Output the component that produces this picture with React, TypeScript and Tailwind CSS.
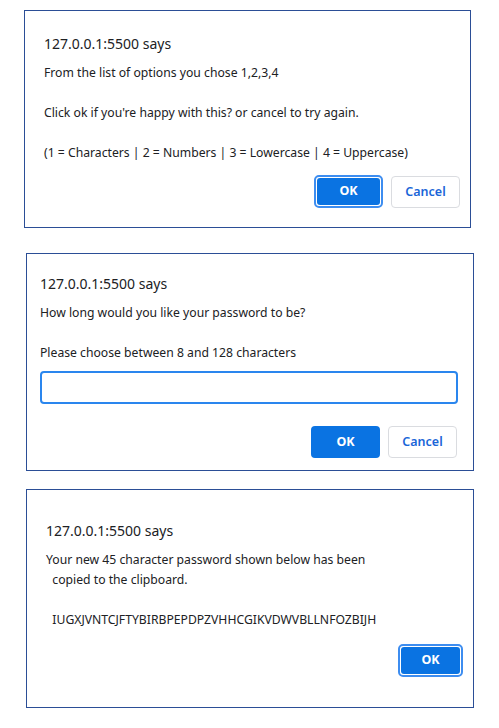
import React from "react";

const font = { fontFamily: '"Noto Sans", "Open Sans", Arial, sans-serif' };

const OkButton: React.FC<{ focused?: boolean; className?: string }> = ({
  focused,
  className,
}) => {
  if (focused) {
    return (
      <div
        className={
          "rounded-[5px] border-2 border-[#3d8df0] p-px " + (className || "")
        }
      >
        <div className="flex h-full w-full items-center justify-center rounded-[3px] bg-[#0a73e2] text-[12.5px] font-bold text-white">
          OK
        </div>
      </div>
    );
  }
  return (
    <div
      className={
        "flex items-center justify-center rounded-[4px] bg-[#0a73e2] text-[12.5px] font-bold text-white " +
        (className || "")
      }
    >
      OK
    </div>
  );
};

const CancelButton: React.FC<{ className?: string }> = ({ className }) => (
  <div
    className={
      "flex items-center justify-center rounded-[4px] border border-[#dadce0] bg-white text-[12.5px] font-semibold text-[#1a66d8] " +
      (className || "")
    }
  >
    Cancel
  </div>
);

export default function App() {
  return (
    <div className="min-h-[728px] bg-white text-[#202124]" style={font}>
      {/* first prompt: confirm */}
      <div className="pt-[10px]">
        <div className="ml-[24px] flex h-[218px] w-[447px] flex-col border border-[#2b4e96] pl-[19px] pr-[10px]">
          <div className="mt-[23px] text-[14px] leading-[20px]">
            127.0.0.1:5500 says
          </div>
          <div className="mt-[9px] whitespace-pre text-[12.2px] leading-[20px]">
            {"From the list of options you chose 1,2,3,4\n\nClick ok if you're happy with this? or cancel to try again.\n\n(1 = Characters | 2 = Numbers | 3 = Lowercase | 4 = Uppercase)"}
          </div>
          <div className="mt-[12px] flex justify-end gap-[8px]">
            <OkButton focused className="h-[33px] w-[69px]" />
            <CancelButton className="mt-px h-[32px] w-[69px]" />
          </div>
        </div>
      </div>

      {/* second prompt: length */}
      <div className="pt-[25px]">
        <div className="ml-[26px] flex h-[218px] w-[448px] flex-col border border-[#2b4e96] pl-[13px] pr-[16px]">
          <div className="mt-[20px] text-[14px] leading-[20px]">
            127.0.0.1:5500 says
          </div>
          <div className="mt-[9px] whitespace-pre text-[12.2px] leading-[20px]">
            {"How long would you like your password to be?\n\nPlease choose between 8 and 128 characters"}
          </div>
          <div className="mt-[8px] h-[33px] w-[418px] rounded-[4px] border-2 border-[#2a86ee] bg-white" />
          <div className="mt-[22px] flex justify-end gap-[8px]">
            <OkButton className="h-[32px] w-[69px]" />
            <CancelButton className="h-[32px] w-[69px]" />
          </div>
        </div>
      </div>

      {/* third alert: result */}
      <div className="pt-[18px]">
        <div className="ml-[26px] flex h-[219px] w-[448px] flex-col border border-[#2b4e96] pl-[19px] pr-[10px]">
          <div className="mt-[31px] text-[14px] leading-[20px]">
            127.0.0.1:5500 says
          </div>
          <div className="mt-[9px] whitespace-pre text-[12.2px] leading-[20px]">
            {"Your new 45 character password shown below has been\n  copied to the clipboard.\n\n  IUGXJVNTCJFTYBIRBPEPDPZVHHCGIKVDWVBLLNFOZBIJH"}
          </div>
          <div className="mt-[14px] flex justify-end">
            <OkButton focused className="h-[33px] w-[65px]" />
          </div>
        </div>
      </div>
    </div>
  );
}
